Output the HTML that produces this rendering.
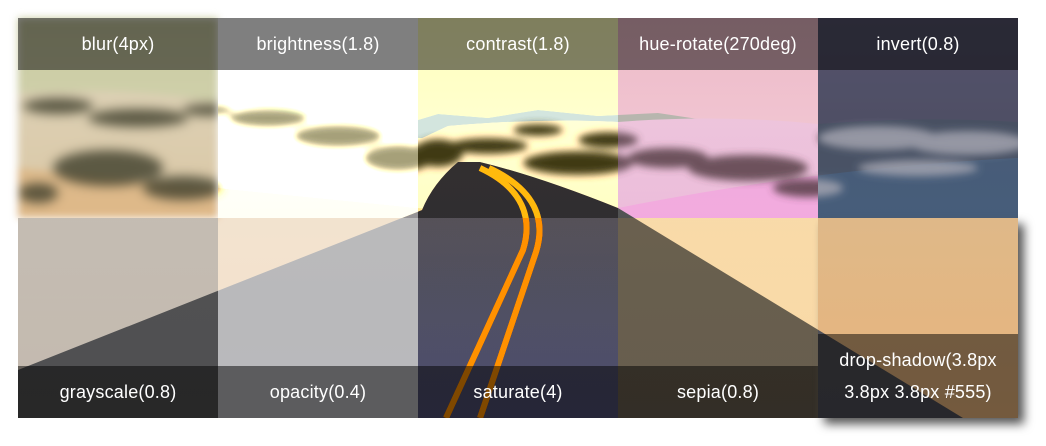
<!DOCTYPE html>
<html><head><meta charset="utf-8"><style>
html,body{margin:0;padding:0;background:#fff;width:1046px;height:446px;overflow:hidden}
.cell{position:absolute;width:200px;height:200px}
.in{position:absolute;left:0;top:0;width:200px;height:200px;overflow:hidden}
.in svg{position:absolute;width:1000px;height:400px}
.lab{position:absolute;left:0;width:200px;height:52px;background:rgba(0,0,0,0.5);color:#fff;font:18px "Liberation Sans",sans-serif;text-align:center;line-height:52px;letter-spacing:0.2px}
.t{top:0}.b{bottom:0}
</style></head><body>
<svg width="0" height="0" style="position:absolute">
<defs>
<linearGradient id="sky" x1="0" y1="0" x2="0" y2="1"><stop offset="0" stop-color="#c8caa0"/><stop offset="0.3" stop-color="#d2d2ae"/><stop offset="1" stop-color="#dcd8c0"/></linearGradient>
<linearGradient id="dune" x1="0" y1="0" x2="0" y2="1"><stop offset="0" stop-color="#dcd0b4"/><stop offset="1" stop-color="#d8b88c"/></linearGradient>
<linearGradient id="sand" x1="0" y1="0" x2="0" y2="1"><stop offset="0" stop-color="#dcba8c"/><stop offset="1" stop-color="#e8b47c"/></linearGradient>
<linearGradient id="road" x1="0" y1="0" x2="0" y2="1"><stop offset="0" stop-color="#555353"/><stop offset="0.5" stop-color="#515155"/><stop offset="1" stop-color="#4f4f58"/></linearGradient>
<filter id="sf" x="-20%" y="-50%" width="140%" height="200%"><feGaussianBlur stdDeviation="4"/></filter>
<symbol id="scene" viewBox="0 0 1000 400">
<rect width="1000" height="400" fill="url(#sky)"/>
<path d="M380 108 L420 96 L470 100 L520 92 L580 98 L640 95 L700 104 L700 120 L380 120Z" fill="#aeb8b4"/>
<path d="M0 75 Q100 68 200 84 Q300 98 400 122 L430 108 Q520 100 600 104 Q700 96 800 106 Q900 98 1000 104 L1000 400 L0 400Z" fill="url(#dune)"/>
<path d="M0 150 Q200 170 420 192 L600 190 Q800 150 1000 140 L1000 400 L0 400Z" fill="url(#sand)"/>
<g fill="#3c3c2a" opacity="0.8" filter="url(#sf)">
<ellipse cx="40" cy="88" rx="35" ry="8"/><ellipse cx="120" cy="100" rx="50" ry="9"/><ellipse cx="190" cy="92" rx="25" ry="6"/>
<ellipse cx="90" cy="150" rx="55" ry="18"/><ellipse cx="165" cy="170" rx="40" ry="12"/><ellipse cx="20" cy="175" rx="20" ry="10"/>
<ellipse cx="250" cy="100" rx="40" ry="10"/><ellipse cx="320" cy="118" rx="45" ry="12"/>
<ellipse cx="380" cy="140" rx="35" ry="14"/><ellipse cx="420" cy="135" rx="25" ry="14"/>
<ellipse cx="470" cy="128" rx="40" ry="8"/><ellipse cx="560" cy="145" rx="55" ry="12"/>
<ellipse cx="590" cy="122" rx="30" ry="8"/><ellipse cx="520" cy="112" rx="25" ry="6"/>
<ellipse cx="650" cy="140" rx="40" ry="10"/><ellipse cx="730" cy="150" rx="60" ry="13"/>
<ellipse cx="790" cy="170" rx="35" ry="9"/><ellipse cx="860" cy="120" rx="60" ry="12"/>
<ellipse cx="950" cy="125" rx="60" ry="12"/><ellipse cx="900" cy="150" rx="60" ry="8"/>
</g>
<path d="M440 144 Q415 165 404 192 L0 352 L0 400 L945 400 L600 190 Q520 158 462 144Z" fill="url(#road)"/>
<path d="M462 150 C505 170 515 200 505 232 L428 400" fill="none" stroke="#d8a040" stroke-width="6"/>
<path d="M471 150 C518 172 528 202 518 234 L462 400" fill="none" stroke="#d8a040" stroke-width="6"/>
</symbol>
</defs></svg>

<div class="cell" style="left:18px;top:18px"><div class="in" style="filter:blur(4px)"><svg style="left:0;top:0"><use href="#scene"/></svg></div><div class="lab t">blur(4px)</div></div>
<div class="cell" style="left:218px;top:18px"><div class="in" style="filter:brightness(1.8)"><svg style="left:-200px;top:0"><use href="#scene"/></svg></div><div class="lab t">brightness(1.8)</div></div>
<div class="cell" style="left:418px;top:18px"><div class="in" style="filter:contrast(1.8)"><svg style="left:-400px;top:0"><use href="#scene"/></svg></div><div class="lab t">contrast(1.8)</div></div>
<div class="cell" style="left:618px;top:18px"><div class="in" style="filter:hue-rotate(270deg)"><svg style="left:-600px;top:0"><use href="#scene"/></svg></div><div class="lab t">hue-rotate(270deg)</div></div>
<div class="cell" style="left:818px;top:18px"><div class="in" style="filter:invert(0.8)"><svg style="left:-800px;top:0"><use href="#scene"/></svg></div><div class="lab t">invert(0.8)</div></div>

<div class="cell" style="left:18px;top:218px"><div class="in" style="filter:grayscale(0.8)"><svg style="left:0;top:-200px"><use href="#scene"/></svg></div><div class="lab b">grayscale(0.8)</div></div>
<div class="cell" style="left:218px;top:218px"><div class="in" style="filter:opacity(0.4)"><svg style="left:-200px;top:-200px"><use href="#scene"/></svg></div><div class="lab b">opacity(0.4)</div></div>
<div class="cell" style="left:418px;top:218px"><div class="in" style="filter:saturate(4)"><svg style="left:-400px;top:-200px"><use href="#scene"/></svg></div><div class="lab b">saturate(4)</div></div>
<div class="cell" style="left:618px;top:218px"><div class="in" style="filter:sepia(0.8)"><svg style="left:-600px;top:-200px"><use href="#scene"/></svg></div><div class="lab b">sepia(0.8)</div></div>
<div class="cell" style="left:818px;top:218px;filter:drop-shadow(6px 6px 5px #555)"><div class="in"><svg style="left:-800px;top:-200px"><use href="#scene"/></svg></div><div class="lab b" style="height:84px;line-height:32px;padding-top:10px;box-sizing:border-box">drop-shadow(3.8px<br>3.8px 3.8px #555)</div></div>
</body></html>
